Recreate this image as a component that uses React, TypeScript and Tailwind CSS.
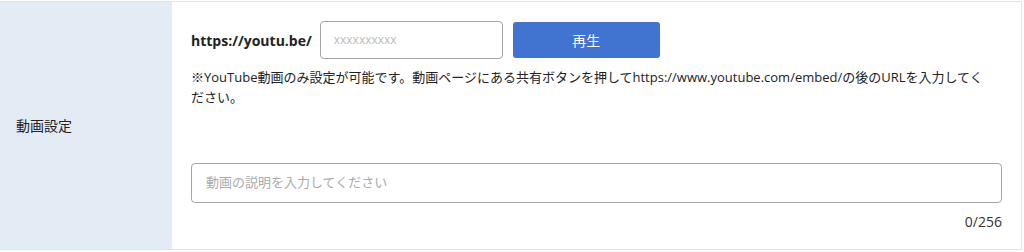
export default function App() {
  const font = { fontFamily: '"Open Sans", "Noto Sans CJK JP", sans-serif' };
  return (
    <div className="w-[1024px] h-[252px] bg-white pt-[1px]" style={font}>
      <div className="flex w-[1022px] h-[249px] border-t border-b border-r border-[#e3e3e3]">
        <div className="w-[172px] shrink-0 bg-[#e3ebf5] flex items-center pl-[16px] text-[14px] text-[#222]">
          動画設定
        </div>
        <div className="flex-1 pl-[19px] pr-[18px] pt-[19px]">
          <div className="flex items-center">
            <span className="text-[14px] font-bold text-[#222] mr-[8px]">https://youtu.be/</span>
            <div className="w-[183px] h-[38px] border border-[#a5a5a5] rounded-[4px] flex items-center pl-[13px] text-[12px] text-[#bbb]">
              xxxxxxxxxx
            </div>
            <button className="ml-[10px] w-[147px] h-[36px] bg-[#4174d0] rounded-[3px] text-white text-[14px]">
              再生
            </button>
          </div>
          <p className="mt-[8px] text-[13px] leading-[20px] text-[#222] w-[800px]">
            ※YouTube動画のみ設定が可能です。動画ページにある共有ボタンを押してhttps://www.youtube.com/embed/の後のURLを入力してください。
          </p>
          <div className="mt-[56px] w-[811px] h-[40px] border border-[#a5a5a5] rounded-[4px] flex items-center pl-[14px] text-[13px] text-[#aaa]">
            動画の説明を入力してください
          </div>
          <div className="w-[811px] text-right text-[14px] text-[#333] mt-[8px]">0/256</div>
        </div>
      </div>
    </div>
  );
}
